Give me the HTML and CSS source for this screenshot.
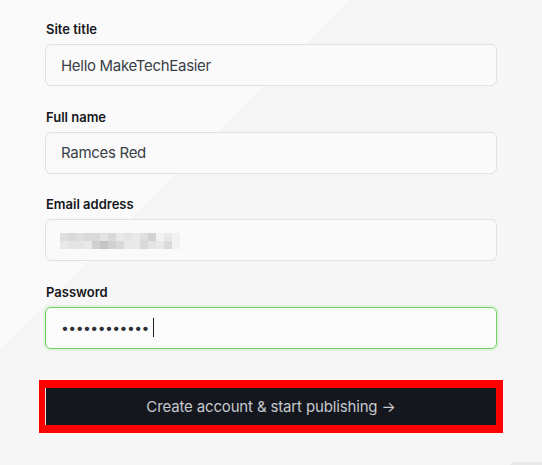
FILE: index.html
```html
<!DOCTYPE html>
<html lang="en">
<head>
<meta charset="utf-8">
<title>Sign up</title>
<link rel="stylesheet" href="styles.css">
</head>
<body>
<main class="form">
  <div class="field">
    <label class="label">Site title</label>
    <div class="input">Hello MakeTechEasier</div>
  </div>
  <div class="field">
    <label class="label">Full name</label>
    <div class="input">Ramces Red</div>
  </div>
  <div class="field">
    <label class="label">Email address</label>
    <div class="input">
      <div class="blur">
        <i class="s3"></i><i class="s4"></i><i class="s3"></i><i class="s4"></i><i class="s4"></i><i class="s2"></i><i class="s4"></i><i class="s1"></i><i class="s2"></i><i class="s1"></i><i class="s3"></i><i class="s5"></i><i class="s0"></i><i class="s1"></i><i class="s0"></i>
        <i class="s1"></i><i class="s2"></i><i class="s2"></i><i class="s1"></i><i class="s5"></i><i class="s6"></i><i class="s5"></i><i class="s4"></i><i class="s1"></i><i class="s1"></i><i class="s4"></i><i class="s2"></i><i class="s1"></i><i class="s4"></i><i class="s0"></i>
      </div>
    </div>
  </div>
  <div class="field">
    <label class="label">Password</label>
    <div class="input input-focus"><span class="dots">••••••••••••</span><span class="caret"></span></div>
  </div>
  <div class="submit-frame">
    <button class="submit">Create account &amp; start publishing →</button>
  </div>
</main>
</body>
</html>
```
FILE: styles.css
```css
html, body {
  margin: 0;
  height: 100%;
}
body {
  font-family: Inter, "Noto Sans", sans-serif;
  background:
    linear-gradient(135deg, transparent 0, transparent 20px, #e9e9e9 20px) no-repeat right bottom / 58px 3px,
    linear-gradient(135deg, #fafafa 0, #fafafa 247px, #f6f6f6 247px);
  overflow: hidden;
}
.form {
  padding: 21px 45px 0 45px;
  width: 452px;
  display: flex;
  flex-direction: column;
  gap: 22.5px;
}
.field {
  display: flex;
  flex-direction: column;
  gap: 7px;
}
.label {
  font-size: 13px;
  line-height: 16px;
  font-weight: 600;
  color: #15171a;
  padding-left: 1px;
}
.input {
  box-sizing: border-box;
  height: 42px;
  border: 1px solid #e1e1e1;
  border-radius: 6px;
  background: #fafafa;
  padding: 0 15px;
  display: flex;
  align-items: center;
  font-size: 15px;
  letter-spacing: -0.3px;
  color: #394047;
}
.input-focus {
  border-color: #6cd35c;
  box-shadow: 0 0 0 2px rgba(108, 211, 92, 0.14);
  background: #fcfcfc;
}
.blur {
  display: grid;
  grid-template-columns: repeat(15, 8px);
  grid-auto-rows: 8px;
  margin-top: 2px;
  margin-left: -1px;
}
.blur i { display: block; }
.s0 { background: #f2f2f2; }
.s1 { background: #e9e9e9; }
.s2 { background: #e4e4e4; }
.s3 { background: #dfdfdf; }
.s4 { background: #d9d9db; }
.s5 { background: #d0d1d3; }
.s6 { background: #c4c5c7; }
.dots {
  font-size: 14px;
  letter-spacing: -0.55px;
  color: #2d3138;
}
.caret {
  display: inline-block;
  width: 1px;
  height: 19px;
  background: #1a1c20;
  margin-left: 4px;
}
.submit-frame {
  margin-top: 8.5px;
  margin-left: -6px;
  width: 464px;
  box-sizing: border-box;
  background: #ff0000;
  padding: 8px 7px 8px 6px;
}
.submit {
  display: block;
  width: 451px;
  height: 37px;
  box-sizing: border-box;
  border: 0;
  border-left: 1px solid #e6e6e6;
  background: #15171e;
  color: #c6c9ce;
  font-family: Inter, "Noto Sans", sans-serif;
  font-size: 15px;
  letter-spacing: -0.15px;
  font-weight: 400;
  padding: 0;
  margin: 0;
  cursor: pointer;
}
```
